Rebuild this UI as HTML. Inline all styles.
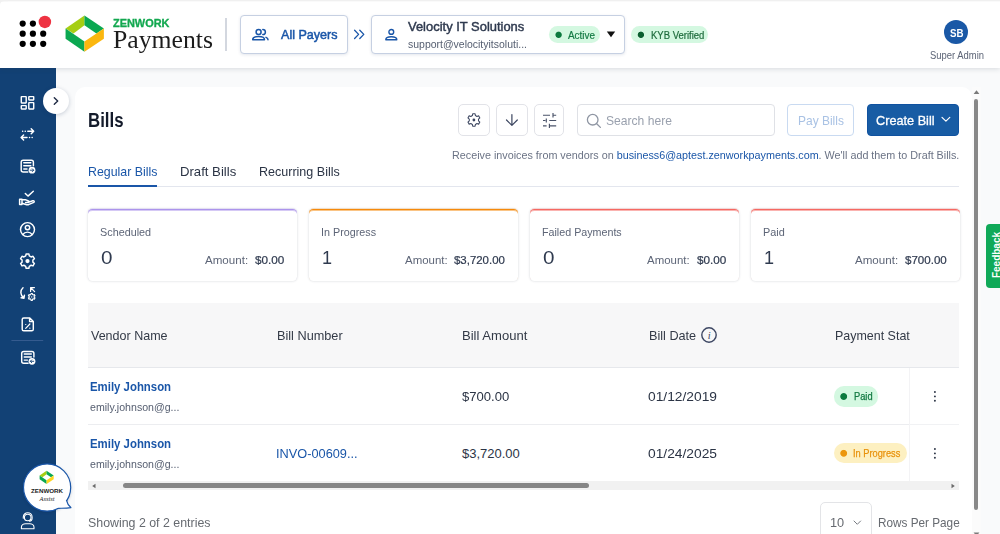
<!DOCTYPE html>
<html lang="en">
<head>
<meta charset="utf-8">
<title>Zenwork Payments - Bills</title>
<style>
*{box-sizing:border-box;margin:0;padding:0}
html,body{width:1000px;height:534px;overflow:hidden;background:#f9fafb}
body{position:relative;font-family:"Liberation Sans",sans-serif;color:#2f3a4f}
.t{position:absolute;white-space:nowrap;line-height:1;font-size:13px;transform-origin:0 0;display:block}
.abs{position:absolute}
svg{position:absolute;overflow:visible}
/* header */
#hdr{position:absolute;left:0;top:0;width:1000px;height:68px;background:#fff;box-shadow:0 1px 5px rgba(40,50,70,.16);z-index:5}
#hdr .topline{position:absolute;left:0;top:0;width:1000px;height:1px;background:#f0f0f0;box-shadow:0 1px 0 rgba(240,240,240,.35)}
.btnbox{position:absolute;top:15px;height:39px;border:1px solid #c6d0e2;border-radius:4px;background:#fff;box-shadow:0 1px 3px rgba(30,60,110,.12)}
.pill{position:absolute;border-radius:10px}
.dot{position:absolute}
/* sidebar */
#side{position:absolute;left:0;top:68px;width:56px;height:466px;background:#124175;z-index:3}
/* main card */
#card{position:absolute;left:75px;top:87px;width:897px;height:460px;background:#fff;border-radius:10px 10px 0 0}
.ibtn{position:absolute;top:103.500px;width:31.600px;height:32px;border:1px solid #e2e3e8;border-radius:5px;background:#fff}
.stat{position:absolute;top:209px;width:209px;height:71.500px;background:#fff;border-radius:4.500px;--c:180,156,248;border-top:1px solid rgb(var(--c));box-shadow:inset 0 1px 0 rgba(var(--c),.5),0 -1px 0 rgba(var(--c),.18),0 0 2.500px rgba(30,40,60,.2)}
#pc{position:absolute;left:-75px;top:-87px;width:1000px;height:600px}
.sl{top:226.500px;font-size:11.500px;color:#5d6577}
.sn{top:248.100px;font-size:19px;color:#2f3a4f}
.sa{top:254.600px;font-size:11.500px;color:#5d6577}
.sv{top:254.600px;font-size:11.500px;color:#2f3a4f;-webkit-text-stroke:0.220px #2f3a4f}
.th{top:328.700px;font-size:13px;color:#333a47}
.vn{font-size:13px;font-weight:700;color:#1a56a8}
.ve{font-size:11.500px;color:#555e70}
.td{font-size:13px;color:#2b3445}
/*LS-START*/
#t_zw{transform:scaleX(1.0612)}
#t_pay{transform:scaleX(1.0279)}
#t_allp{transform:scaleX(0.9664)}
#t_vel{transform:scaleX(0.9954)}
#t_sup{transform:scaleX(0.9525)}
#t_act{transform:scaleX(0.9525)}
#t_kyb{transform:scaleX(0.9155)}
#t_sb{transform:scaleX(0.9269)}
#t_sa{transform:scaleX(0.9437)}
#t_bills{transform:scaleX(0.8412)}
#t_search{transform:scaleX(0.9309)}
#t_payb{transform:scaleX(0.9210)}
#t_create{transform:scaleX(0.9768)}
#t_recv{transform:scaleX(0.9793)}
#t_tab1{transform:scaleX(0.9502)}
#t_tab2{transform:scaleX(1.0105)}
#t_tab3{transform:scaleX(0.9636)}
#t_s1{transform:scaleX(0.9408)}
#t_n1{transform:scaleX(1.0858)}
#t_a1{transform:scaleX(1.0065)}
#t_v1{transform:scaleX(1.0187)}
#t_s2{transform:scaleX(0.9358)}
#t_n2{transform:scaleX(0.9501)}
#t_a2{transform:scaleX(0.9945)}
#t_v2{transform:scaleX(0.9946)}
#t_s3{transform:scaleX(0.9308)}
#t_n3{transform:scaleX(1.0858)}
#t_a3{transform:scaleX(0.9945)}
#t_v3{transform:scaleX(1.0187)}
#t_s4{transform:scaleX(0.9441)}
#t_n4{transform:scaleX(0.9501)}
#t_a4{transform:scaleX(1.0065)}
#t_v4{transform:scaleX(1.0055)}
#t_h1{transform:scaleX(0.9631)}
#t_h2{transform:scaleX(0.9775)}
#t_h3{transform:scaleX(1.0040)}
#t_h4{transform:scaleX(0.9742)}
#t_h5{transform:scaleX(0.9583)}
#t_r1n{transform:scaleX(0.8768)}
#t_r1e{transform:scaleX(0.9207)}
#t_r1a{transform:scaleX(1.0065)}
#t_r1d{transform:scaleX(1.0612)}
#t_paid{transform:scaleX(0.8843)}
#t_r2n{transform:scaleX(0.8768)}
#t_r2e{transform:scaleX(0.9207)}
#t_r2b{transform:scaleX(0.9816)}
#t_r2d{transform:scaleX(1.0612)}
#t_inp{transform:scaleX(0.8823)}
#t_show{transform:scaleX(0.9519)}
#t_ten{transform:scaleX(0.9800)}
#t_rpp{transform:scaleX(0.9045)}
/*LS-END*/
</style>
</head>
<body>

<!-- ================= MAIN CARD ================= -->
<main id="card"><div id="pc">
  <h1 class="t" id="t_bills" style="left:88px;top:110.200px;font-size:20px;font-weight:700;color:#141b2b">Bills</h1>

  <!-- toolbar -->
  <div class="ibtn" style="left:458px"></div>
  <svg style="left:458px;top:103.500px" width="32" height="32" viewBox="458 103.500 32 32" fill="none" stroke="#3c4660" stroke-width="1.050" stroke-linejoin="round">
    <path d="M472.37 115.06 L472.70 113.32 L475.10 113.32 L475.43 115.06 L476.98 115.95 L478.65 115.37 L479.86 117.45 L478.51 118.60 L478.51 120.40 L479.86 121.55 L478.65 123.63 L476.98 123.05 L475.43 123.94 L475.10 125.68 L472.70 125.68 L472.37 123.94 L470.82 123.05 L469.15 123.63 L467.94 121.55 L469.29 120.40 L469.29 118.60 L467.94 117.45 L469.15 115.37 L470.82 115.95z"/>
    <circle cx="473.900" cy="119.500" r="1.400" fill="#3c4660" stroke="none"/>
  </svg>
  <div class="ibtn" style="left:496px"></div>
  <svg style="left:496px;top:103.500px" width="32" height="32" viewBox="496 103.500 32 32" fill="none" stroke="#3c4660" stroke-width="1.200" stroke-linecap="round" stroke-linejoin="round">
    <path d="M511.900 114v10.700M506.500 119.500l5.400 5.400 5.400-5.400"/>
  </svg>
  <div class="ibtn" style="left:534px;width:30px"></div>
  <svg style="left:534px;top:103.500px" width="32" height="32" viewBox="534 103.500 32 32" fill="none" stroke="#4a5369" stroke-width="1.150">
    <path d="M543 114.700h7M553 112.400v4.500M553 114.700h3.200M543 120h2.400M546.300 117.900v4.200M549.300 120h6.900M543 125.300h3.600M549.400 123.200v4.300M549.400 125.300h6.800"/>
  </svg>
  <div class="abs" style="left:577px;top:104px;width:198px;height:32px;border:1px solid #dfe1e6;border-radius:4px;background:#fff"></div>
  <svg style="left:586px;top:112.500px" width="16" height="16" viewBox="0 0 16 16" fill="none" stroke="#8f96a3" stroke-width="1.300" stroke-linecap="round">
    <circle cx="6.700" cy="6.700" r="5.300"/><path d="M10.700 10.700l3.700 3.700"/>
  </svg>
  <span class="t" id="t_search" style="left:606px;top:113.600px;font-size:13px;color:#9aa1ae">Search here</span>
  <div class="abs" style="left:787px;top:104px;width:67px;height:32px;border:1px solid #c9daf1;border-radius:4px;background:#fff"></div>
  <span class="t" id="t_payb" style="left:798px;top:113.600px;font-size:13px;color:#a9c2e4">Pay Bills</span>
  <div class="abs" style="left:867px;top:104px;width:92px;height:32px;border-radius:4px;background:#185ca4;border:1px solid #1052a0"></div>
  <span class="t" id="t_create" style="left:875.9px;top:113.600px;font-size:13px;color:#fff;-webkit-text-stroke:0.300px #fff">Create Bill</span>
  <svg style="left:941.200px;top:116.300px" width="10" height="7" viewBox="0 0 10 7" fill="none" stroke="#fff" stroke-width="1.200" stroke-linecap="round" stroke-linejoin="round"><path d="M1 1.300l3.900 3.900 3.900-3.900"/></svg>

  <p class="t" id="t_recv" style="left:451.500px;top:150.100px;font-size:11px;color:#6b7385">Receive invoices from vendors on <span style="color:#1a56a8">business6@aptest.zenworkpayments.com</span>. We'll add them to Draft Bills.</p>

  <!-- tabs -->
  <span class="t" id="t_tab1" style="left:88px;top:165px;font-size:13px;color:#1a56a8">Regular Bills</span>
  <span class="t" id="t_tab2" style="left:179.7px;top:165px;font-size:13px;color:#2b3445">Draft Bills</span>
  <span class="t" id="t_tab3" style="left:259.4px;top:165px;font-size:13px;color:#2b3445">Recurring Bills</span>
  <div class="abs" style="left:88px;top:186px;width:871px;height:1px;background:#e3e6ee"></div>
  <div class="abs" style="left:88px;top:185px;width:69px;height:2px;background:#1a56a8"></div>

  <!-- stat cards -->
  <section class="stat" style="left:88px;--c:172,148,236"></section>
  <section class="stat" style="left:309px;--c:246,138,12"></section>
  <section class="stat" style="left:530px;--c:246,104,98"></section>
  <section class="stat" style="left:751px;--c:246,104,98"></section>

  <span class="t sl" id="t_s1" style="left:100px">Scheduled</span>
  <span class="t sn" id="t_n1" style="left:100.7px">0</span>
  <span class="t sa" id="t_a1" style="left:204.5px">Amount:</span>
  <span class="t sv" id="t_v1" style="left:255px">$0.00</span>

  <span class="t sl" id="t_s2" style="left:320.5px">In Progress</span>
  <span class="t sn" id="t_n2" style="left:321.8px">1</span>
  <span class="t sa" id="t_a2" style="left:404.5px">Amount:</span>
  <span class="t sv" id="t_v2" style="left:454px">$3,720.00</span>

  <span class="t sl" id="t_s3" style="left:542.0px">Failed Payments</span>
  <span class="t sn" id="t_n3" style="left:542.6px">0</span>
  <span class="t sa" id="t_a3" style="left:647.0px">Amount:</span>
  <span class="t sv" id="t_v3" style="left:697px">$0.00</span>

  <span class="t sl" id="t_s4" style="left:763.0px">Paid</span>
  <span class="t sn" id="t_n4" style="left:763.8px">1</span>
  <span class="t sa" id="t_a4" style="left:855.0px">Amount:</span>
  <span class="t sv" id="t_v4" style="left:905.0px">$700.00</span>

  <!-- table -->
  <div class="abs" style="left:88px;top:303px;width:871px;height:64.500px;background:#f7f7f8"></div>
  <div class="abs" style="left:88px;top:367px;width:871px;height:1px;background:#e6e8ec"></div>
  <div class="abs" style="left:88px;top:424px;width:871px;height:1px;background:#ecedf0"></div>
  <span class="t th" id="t_h1" style="left:91px">Vendor Name</span>
  <span class="t th" id="t_h2" style="left:277px">Bill Number</span>
  <span class="t th" id="t_h3" style="left:462.3px">Bill Amount</span>
  <span class="t th" id="t_h4" style="left:648.6px">Bill Date</span>
  <svg style="left:701.400px;top:326.600px" width="16" height="16" viewBox="0 0 16 16"><circle cx="8" cy="8" r="7.200" fill="none" stroke="#3d4763" stroke-width="1.400"/><text x="8.100" y="11.600" text-anchor="middle" font-family="Liberation Serif,serif" font-style="italic" font-size="10.500" fill="#3d4763">i</text></svg>
  <span class="t th" id="t_h5" style="left:835px">Payment Status</span>
  <!-- sticky action column -->
  <div class="abs" style="left:909.500px;top:303px;width:49.500px;height:64px;background:#f7f7f8"></div>
  <div class="abs" style="left:909px;top:368px;width:50px;height:113.500px;background:#fff;border-left:1px solid #f3f3f5"></div>
  <div class="abs" style="left:910px;top:424px;width:49px;height:1px;background:#f1f2f4"></div>

  <span class="t vn" id="t_r1n" style="left:89.7px;top:380.100px">Emily Johnson</span>
  <span class="t ve" id="t_r1e" style="left:89.500px;top:401.900px">emily.johnson@g...</span>
  <span class="t td" id="t_r1a" style="left:462px;top:389.700px">$700.00</span>
  <span class="t td" id="t_r1d" style="left:648px;top:389.700px">01/12/2019</span>
  <div class="pill" style="left:834px;top:386px;width:43.500px;height:20.500px;background:#d4f8e1"></div>
  <div class="dot" style="left:837px;top:390px;width:12px;height:12px;background:radial-gradient(circle at 6.7px 6.5px,#0b7a3e 2.95px,transparent 3.85px)"></div>
  <span class="t" id="t_paid" style="left:854.0px;top:391.300px;font-size:10.500px;color:#137a43;-webkit-text-stroke:0.250px #137a43">Paid</span>

  <span class="t vn" id="t_r2n" style="left:89.7px;top:437.300px">Emily Johnson</span>
  <span class="t ve" id="t_r2e" style="left:89.500px;top:458.900px">emily.johnson@g...</span>
  <span class="t td" id="t_r2b" style="left:275.5px;top:446.900px;color:#1a56a8">INVO-00609...</span>
  <span class="t td" id="t_r2a" style="left:462px;top:446.900px">$3,720.00</span>
  <span class="t td" id="t_r2d" style="left:648px;top:446.900px">01/24/2025</span>
  <div class="pill" style="left:834px;top:442.800px;width:72.800px;height:20.600px;background:#fdf0c1"></div>
  <div class="dot" style="left:837px;top:447px;width:12px;height:12px;background:radial-gradient(circle at 6.7px 6.3px,#ec960d 2.95px,transparent 3.85px)"></div>
  <span class="t" id="t_inp" style="left:853px;top:448.100px;font-size:10.500px;color:#e8920c;-webkit-text-stroke:0.250px #e8920c">In Progress</span>

  <svg style="left:932px;top:388px" width="6" height="76" viewBox="0 0 6 76" fill="#2b3445">
    <circle cx="2.900" cy="4" r="0.950"/><circle cx="2.900" cy="8.400" r="0.950"/><circle cx="2.900" cy="12.800" r="0.950"/>
    <circle cx="2.900" cy="61" r="0.950"/><circle cx="2.900" cy="65.400" r="0.950"/><circle cx="2.900" cy="69.800" r="0.950"/>
  </svg>

  <!-- horizontal scrollbar -->
  <div class="abs" style="left:88px;top:481px;width:871px;height:8.500px;background:#f1f1f1"></div>
  <div class="abs" style="left:123px;top:483.300px;width:466px;height:5px;border-radius:2.500px;background:#868686"></div>
  <svg style="left:91px;top:482.500px" width="6" height="6" viewBox="0 0 6 6"><path d="M4.500 0.800v4.400l-3.300-2.200z" fill="#6a6a6a"/></svg>
  <svg style="left:950px;top:482.500px" width="6" height="6" viewBox="0 0 6 6"><path d="M1.500 0.800v4.400l3.300-2.200z" fill="#6a6a6a"/></svg>

  <!-- footer -->
  <span class="t" id="t_show" style="left:87.6px;top:516px;font-size:13px;color:#666a70">Showing 2 of 2 entries</span>
  <div class="abs" style="left:820px;top:502px;width:52px;height:40px;border:1px solid #e3e4e7;border-radius:5px;background:#fff"></div>
  <span class="t" id="t_ten" style="left:829.8px;top:516px;font-size:13px;color:#666a70">10</span>
  <svg style="left:853px;top:520px" width="9" height="6" viewBox="0 0 9 6" fill="none" stroke="#777b82" stroke-width="1" stroke-linecap="round" stroke-linejoin="round"><path d="M1 1l3.300 3.300 3.300-3.300"/></svg>
  <span class="t" id="t_rpp" style="left:877.5px;top:516px;font-size:13px;color:#666a70">Rows Per Page</span>
</div></main>

<!-- ================= HEADER ================= -->
<header id="hdr">
  <div class="topline"></div>
  <svg style="left:0;top:0" width="8" height="8" viewBox="0 0 8 8"><path d="M0 0h8v1.200h-4a4 3.800 0 0 0-4 3.800z" fill="#f1f1f1"/></svg>
  <!-- app grid -->
  <svg style="left:0;top:0" width="60" height="68" viewBox="0 0 60 68">
    <g fill="#000">
      <circle cx="22.7" cy="23.6" r="3.1"/><circle cx="32.9" cy="23.6" r="3.1"/>
      <circle cx="22.7" cy="33.7" r="3.1"/><circle cx="32.9" cy="33.7" r="3.1"/><circle cx="43.2" cy="33.7" r="3.1"/>
      <circle cx="22.7" cy="43.8" r="3.1"/><circle cx="32.9" cy="43.8" r="3.1"/><circle cx="43.2" cy="43.8" r="3.1"/>
    </g>
    <circle cx="44.9" cy="21.9" r="6.25" fill="#ee3342"/>
  </svg>
  <!-- logo -->
  <svg style="left:60px;top:10px" width="50" height="48" viewBox="60 10 50 48">
    <polygon points="84.46,15.58 65.58,28.44 73.49,33.38 84.46,25.29" fill="#a6ce13"/>
    <polygon points="84.46,15.58 103.88,28.44 96.42,33.38 84.46,25.29" fill="#0ba851"/>
    <polygon points="65.58,28.44 65.58,38.78 84.46,51.82 84.46,41.47" fill="#0ba851"/>
    <polygon points="103.88,28.44 103.88,38.78 84.46,51.82 84.46,41.47" fill="#fbb70f"/>
  </svg>
  <span class="t" id="t_zw" style="left:113px;top:18.7px;font-size:10.3px;font-weight:700;color:#13a850;-webkit-text-stroke:0.3px #13a850">ZENWORK</span>
  <span class="t" id="t_pay" style="left:112.7px;top:27.1px;font-size:25px;font-family:'Liberation Serif',serif;color:#1c1c1c">Payments</span>
  <div class="abs" style="left:225px;top:18px;width:2px;height:33px;background:#d3d7df"></div>

  <!-- All payers -->
  <div class="btnbox" style="left:240px;width:107.500px"></div>
  <svg style="left:251px;top:27px" width="20" height="16" viewBox="0 0 20 16" fill="none" stroke="#1a56a8" stroke-width="1.5" stroke-linecap="round">
    <circle cx="7.6" cy="5" r="2.5"/>
    <path d="M1.7 12.7c0-2 2.6-3.1 5.9-3.1s5.9 1.100 5.900 3.100z" stroke-linejoin="round"/>
    <path d="M11.8 2.400a2.600 2.600 0 0 1 0 5.200"/>
    <path d="M15 10.400c1.300 0.600 2 1.400 2 2.400"/>
  </svg>
  <span class="t" id="t_allp" style="left:280.8px;top:27.9px;font-size:13px;color:#1a56a8;-webkit-text-stroke:0.5px #1a56a8">All Payers</span>
  <svg style="left:353px;top:29px" width="13" height="11" viewBox="0 0 13 11" fill="none" stroke="#1a56a8" stroke-width="1.300" stroke-linecap="round" stroke-linejoin="round">
    <path d="M1.6 1.300l4 4.100-4 4.100M6.800 1.300l4 4.100-4 4.100"/>
  </svg>

  <!-- payer select -->
  <div class="btnbox" style="left:371px;width:254px"></div>
  <svg style="left:384px;top:28px" width="15" height="14" viewBox="0 0 15 14" fill="none" stroke="#1a56a8" stroke-width="1.400" stroke-linejoin="round">
    <circle cx="7.300" cy="3.900" r="2.400"/>
    <path d="M1.800 11.700c0-2 2.500-3 5.500-3s5.500 1 5.500 3z"/>
  </svg>
  <span class="t" id="t_vel" style="left:408px;top:20.1px;font-size:13px;color:#2f3a4f;-webkit-text-stroke:0.45px #2f3a4f">Velocity IT Solutions</span>
  <span class="t" id="t_sup" style="left:408px;top:38.6px;font-size:11px;color:#555e70">support@velocityitsoluti...</span>
  <div class="pill" style="left:549px;top:26.200px;width:50.500px;height:17.200px;background:#d4f8e1"></div>
  <div class="dot" style="left:552px;top:28px;width:12px;height:12px;background:radial-gradient(circle at 6.6px 6.8px,#0b7a3e 2.70px,transparent 3.60px)"></div>
  <span class="t" id="t_act" style="left:568px;top:30.500px;font-size:10.400px;color:#137a43;-webkit-text-stroke:0.200px #137a43">Active</span>
  <svg style="left:606px;top:31px" width="10" height="7" viewBox="0 0 10 7"><path d="M0.800 0.600h8.400l-4.200 5.700z" fill="#111"/></svg>
  <div class="pill" style="left:631.300px;top:26.200px;width:76.700px;height:17.200px;background:#d4f8e1"></div>
  <div class="dot" style="left:634px;top:28px;width:12px;height:12px;background:radial-gradient(circle at 6.9px 6.8px,#0b5f30 2.70px,transparent 3.60px)"></div>
  <span class="t" id="t_kyb" style="left:650.500px;top:30.500px;font-size:10.400px;color:#1e6b3c;-webkit-text-stroke:0.200px #1e6b3c">KYB Verified</span>

  <!-- avatar -->
  <div class="abs" style="left:944.200px;top:20px;width:24px;height:24px;border-radius:50%;background:#1a58a6"></div>
  <span class="t" id="t_sb" style="left:949.600px;top:27.600px;font-size:10.500px;font-weight:700;color:#fff">SB</span>
  <span class="t" id="t_sa" style="left:929.500px;top:50.500px;font-size:10px;color:#5d6577">Super Admin</span>
</header>

<!-- ================= SIDEBAR ================= -->
<aside id="side">
  <svg style="left:0;top:0" width="56" height="466" viewBox="0 68 56 466" fill="none" stroke="#fff" stroke-width="1.450" stroke-linecap="round" stroke-linejoin="round">
    <!-- dashboard -->
    <rect x="21.300" y="96.600" width="4.900" height="6.300" rx="0.300"/>
    <rect x="28.800" y="96.600" width="4.900" height="3.300" rx="0.300"/>
    <rect x="21.300" y="105.600" width="4.900" height="3.300" rx="0.300"/>
    <rect x="28.800" y="102.600" width="4.900" height="6.300" rx="0.300"/>
    <!-- transfers -->
    <path d="M27.800 131.200h5.800M31.200 128.700l2.500 2.500-2.500 2.500M22.600 131.200h0.100M25.200 131.200h0.100"/>
    <path d="M27 137.400h-5.800M23.600 134.900l-2.500 2.500 2.500 2.500M29.500 137.400h0.100M32.100 137.400h0.100"/>
    <!-- bills -->
    <path d="M33.400 165.800v-3.600a2 2 0 0 0-2-2h-8.200a2 2 0 0 0-2 2v7.800a2 2 0 0 0 2 2h4.600"/>
    <path d="M23.800 162.800h7M23.800 165.800h7M23.800 168.900h3.200"/>
    <circle cx="32" cy="170.200" r="3.400" fill="#fff" stroke="none"/>
    <path d="M30.300 170.200h3.200M32.300 168.800l1.400 1.400-1.400 1.400" stroke="#124175" stroke-width="0.900"/>
    <!-- hand + check -->
    <path d="M25.300 193.400l2.700 2.700 5.300-4.800"/>
    <rect x="19.600" y="199.200" width="2.400" height="5.300"/>
    <path d="M22 199.700h3.300l3.200 1.300c0.800 0.300 0.700 1.400-0.200 1.400h-2.700M28.500 202.200l4.300-1.400c1.200-0.300 2 0.800 1 1.500l-5.300 2.400c-0.600 0.200-1.200 0.200-1.800 0l-4.700-1.500"/>
    <!-- user circle -->
    <circle cx="27.500" cy="229.600" r="7"/>
    <circle cx="27.500" cy="227.600" r="2.200"/>
    <path d="M22.800 234.500c1.200-1.700 2.800-2.400 4.700-2.400s3.500 0.700 4.700 2.400"/>
    <!-- settings -->
    <path d="M25.71 255.90 L26.11 253.93 L28.89 253.93 L29.29 255.90 L31.11 256.95 L33.01 256.31 L34.40 258.72 L32.90 260.05 L32.90 262.15 L34.40 263.48 L33.01 265.89 L31.11 265.25 L29.29 266.30 L28.89 268.27 L26.11 268.27 L25.71 266.30 L23.89 265.25 L21.99 265.89 L20.60 263.48 L22.10 262.15 L22.10 260.05 L20.60 258.72 L21.99 256.31 L23.89 256.95z"/>
    <circle cx="27.500" cy="261.100" r="2.100" fill="#fff" stroke="none"/>
    <!-- sync settings -->
    <path d="M23 287.800c-3 2.600-3 7.400 0.800 10.200M24.400 295.200l-0.400 3-2.900-0.400"/>
    <path d="M30.600 291.400v-3.800h3.800M30.800 287.800l3.800 3.800" stroke-width="1.250"/>
    <path d="M30.89 294.54 L31.03 293.46 L32.37 293.46 L32.51 294.54 L33.34 295.01 L34.34 294.60 L35.01 295.76 L34.15 296.42 L34.15 297.38 L35.01 298.04 L34.34 299.20 L33.34 298.79 L32.51 299.26 L32.37 300.34 L31.03 300.34 L30.89 299.26 L30.06 298.79 L29.06 299.20 L28.39 298.04 L29.25 297.38 L29.25 296.42 L28.39 295.76 L29.06 294.60 L30.06 295.01z" stroke-width="1.100"/><circle cx="31.700" cy="296.900" r="0.700" fill="#fff" stroke="none"/>
    <!-- tax doc -->
    <path d="M29.800 317.900h-6a1.600 1.600 0 0 0-1.600 1.600v9.700a1.600 1.600 0 0 0 1.600 1.600h7.900a1.600 1.600 0 0 0 1.600-1.600v-7.600zM29.600 318.100v3.500h3.500"/>
    <path d="M25.700 328.400l4.200-4.400M25.700 324.500h0.100M29.800 328.200h0.100" stroke-width="1.200"/>
    <!-- separator -->
    <path d="M11.800 340.500h31" stroke="#3f6295" stroke-width="0.800"/>
    <!-- bills 2 -->
    <path d="M33.900 357v-3.600a2 2 0 0 0-2-2h-8.200a2 2 0 0 0-2 2v7.800a2 2 0 0 0 2 2h4.400"/>
    <path d="M24.300 354h7M24.300 357h7M24.300 360.100h3.200"/>
    <circle cx="32" cy="361.300" r="3.400" fill="#fff" stroke="none"/>
    <path d="M33.700 361.300h-3.200M31.700 359.900l-1.400 1.400 1.400 1.400" stroke="#124175" stroke-width="0.900"/>
    <!-- support agent -->
    <circle cx="27.700" cy="517.500" r="3.300" stroke-width="1.100"/>
    <path d="M23.300 518.300v-1.200a4.400 4.400 0 0 1 8.800 0v1.200M32.100 518.600c0 1.600-1 2.500-2.700 2.700" stroke-width="1.100"/>
    <path d="M21.400 528.800v-1.600c0-2 2-3.500 4.200-3.500h4.200c2.200 0 4.200 1.500 4.200 3.500v1.600z" stroke-width="1.100"/>
  </svg>
</aside>

<!-- sidebar toggle -->
<div class="abs" style="left:43px;top:88px;width:26px;height:26px;border-radius:50%;background:#fff;box-shadow:0 1px 4px rgba(20,40,80,.22);z-index:6"></div>
<svg style="left:51.500px;top:96px;z-index:7" width="8" height="10" viewBox="0 0 8 10" fill="none" stroke="#1f2a44" stroke-width="1.400" stroke-linecap="round" stroke-linejoin="round"><path d="M2.300 1.700l3.400 3.300-3.400 3.300"/></svg>

<!-- Zenwork assist bubble -->
<svg style="left:18px;top:458px;z-index:8" width="60" height="60" viewBox="18 458 60 60">
  <defs><filter id="sh" x="-20%" y="-20%" width="140%" height="140%"><feGaussianBlur stdDeviation="1.600"/></filter></defs>
  <circle cx="47.100" cy="488.500" r="24" fill="#0a1f44" opacity=".22" filter="url(#sh)"/>
  <circle cx="47.100" cy="487.500" r="23.600" fill="#fff" stroke="#1a56a8" stroke-width="1.200"/>
  <path d="M64.500 497.500L66.600 500.200C67.200 503.300 68.400 505.800 70.900 507.600C66.500 508.400 62.500 508.300 58.300 508.400L56 505z" fill="#fff"/>
  <path d="M66.500 500.400C67.200 503.300 68.400 505.800 70.900 507.600C66.500 508.400 62.500 508.200 58.400 508.300" fill="none" stroke="#1a56a8" stroke-width="1.200" stroke-linejoin="round" stroke-linecap="round"/>
  <g transform="translate(39.600 470.700) scale(0.368)">
    <polygon points="18.880,0 0,12.860 7.910,17.800 18.880,9.710" fill="#a6ce13"/>
    <polygon points="18.880,0 38.300,12.860 30.840,17.800 18.880,9.710" fill="#0ba851"/>
    <polygon points="0,12.860 0,23.200 18.880,36.240 18.880,25.890" fill="#0ba851"/>
    <polygon points="38.300,12.860 38.300,23.200 18.880,36.240 18.880,25.890" fill="#ffd51e"/>
  </g>
  <text x="47" y="492.700" text-anchor="middle" font-family="Liberation Sans,sans-serif" font-weight="700" font-size="6.200" fill="#222" textLength="32" lengthAdjust="spacingAndGlyphs">ZENWORK</text>
  <text x="47" y="500.500" text-anchor="middle" font-family="Liberation Serif,serif" font-style="italic" font-size="6.400" fill="#222">Assist</text>
</svg>

<!-- page scrollbar -->
<div class="abs" style="left:972px;top:87px;width:9px;height:447px;background:#fbfbfb"></div>
<div class="abs" style="left:974px;top:99px;width:4px;height:411px;border-radius:2px;background:#888"></div>
<svg style="left:973px;top:89px" width="7" height="6" viewBox="0 0 7 6"><path d="M0.600 5h5.800l-2.900-3.800z" fill="#7a7a7a"/></svg>
<svg style="left:973px;top:530.500px" width="7" height="6" viewBox="0 0 7 6"><path d="M0.600 1.400h5.800l-2.900 3.800z" fill="#7a7a7a"/></svg>

<!-- feedback tab -->
<div class="abs" style="left:985.500px;top:224px;width:20px;height:63.500px;border-radius:4px 0 0 4px;background:#10a958;z-index:4"></div>
<span class="t" id="t_fb" style="left:968.700px;top:250.300px;width:56px;text-align:center;font-size:10px;font-weight:700;color:#fff;transform:rotate(-90deg);transform-origin:50% 50%;z-index:5">Feedback</span>


</body>
</html>
